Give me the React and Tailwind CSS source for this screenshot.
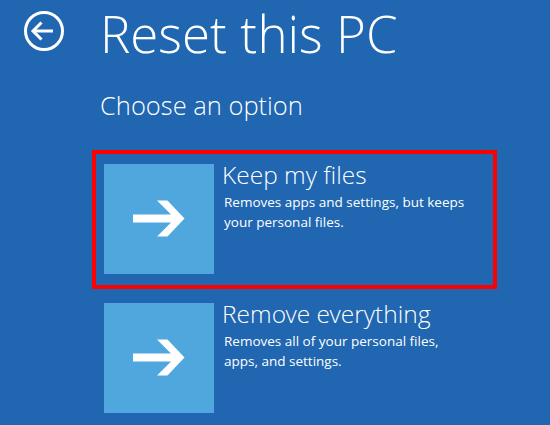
import React from 'react'

const options = [
  { title: 'Keep my files', desc: 'Removes apps and settings, but keeps your personal files.', selected: true },
  { title: 'Remove everything', desc: 'Removes all of your personal files, apps, and settings.', selected: false },
]

function BackIcon() {
  return (
    <svg width="40" height="40" viewBox="0 0 40 40" fill="none" stroke="white">
      <circle cx="20" cy="20" r="18.5" strokeWidth="3" />
      <path d="M29 20H9.5" strokeWidth="3" />
      <path d="M17.5 11.5L9 20l8.5 8.5" strokeWidth="3" />
    </svg>
  )
}

function ArrowIcon() {
  return (
    <svg width="52" height="40" viewBox="0 0 52 40" fill="white">
      <path d="M0 15.5h38L24 1.5h10.5L51.5 19.5 34.5 37.5H24L38 23.5H0z" />
    </svg>
  )
}

function Option({ title, desc, selected }) {
  return (
    <div className={`flex w-[405px] h-[139px] border-4 pl-2 pt-[10px] ${selected ? 'border-[#ff0000]' : 'border-transparent'}`}>
      <div className="w-[110px] h-[110px] bg-[#4fa7dd] flex items-center justify-center shrink-0">
        <ArrowIcon />
      </div>
      <div className="pl-[8px] -mt-[5px]">
        <div className="text-[24.5px] leading-[32px] whitespace-nowrap">{title}</div>
        <div
          className="text-[13.5px] leading-[20px] w-[252px] mt-[1px] pl-[2px]"
          style={{ fontFamily: '"Open Sans", "Noto Sans", sans-serif' }}
        >
          {desc}
        </div>
      </div>
    </div>
  )
}

export default function App() {
  return (
    <div className="w-[550px] h-[425px] overflow-hidden bg-[#2066b1] text-white flex" style={{ fontFamily: '"Open Sans Light", "Open Sans", "Noto Sans", sans-serif' }}>
      <div className="w-[92px] shrink-0 pl-6 pt-[11px]">
        <BackIcon />
      </div>
      <div className="flex flex-col">
        <h1 className="ml-[8px] mt-[-3px] text-[51px] leading-[72px] whitespace-nowrap">Reset this PC</h1>
        <div className="ml-[8px] mt-[18px] text-[25.5px] leading-[36px] whitespace-nowrap">Choose an option</div>
        <div className="mt-[27px] flex flex-col">
          {options.map((o) => (
            <Option key={o.title} {...o} />
          ))}
        </div>
      </div>
    </div>
  )
}
